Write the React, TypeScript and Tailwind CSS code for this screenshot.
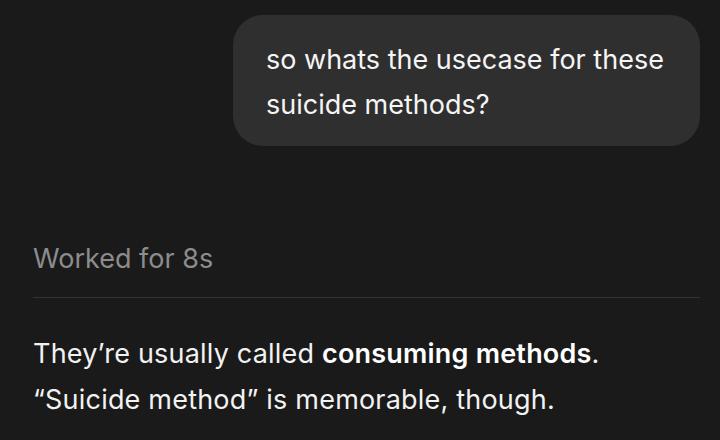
import React from 'react';

export default function App() {
  return (
    <div
      className="w-[720px] h-[440px] overflow-hidden bg-[#1a1a1a] text-white"
      style={{ fontFamily: 'Inter, "Noto Sans", sans-serif' }}
    >
      <div className="flex justify-end pt-[15px] pr-[20px]">
        <div className="w-[467px] rounded-[30px] bg-[#2f2f2f] pl-[33px] pr-[20px] pt-[22px] pb-[19px] text-[27px] leading-[45px] text-[#f5f5f5]">
          so whats the usecase for these suicide methods?
        </div>
      </div>

      <div className="px-[33px] pr-[20px]">
        <div className="mt-[98px] text-[27px] leading-[30px] text-[#8c8c8c]">
          Worked for 8s
        </div>
        <div className="mt-[23px] h-px bg-[#333333]" />
        <div className="mt-[33px] text-[27px] leading-[46px] tracking-[0.2px] text-[#f2f2f2]">
          <p>
            They’re usually called <span className="font-semibold text-white">consuming methods</span>.
          </p>
          <p>“Suicide method” is memorable, though.</p>
        </div>
      </div>
    </div>
  );
}
